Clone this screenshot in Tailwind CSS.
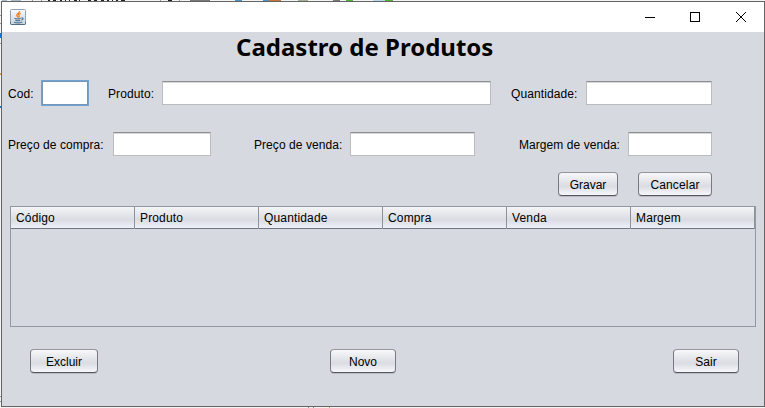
<!DOCTYPE html>
<html lang="pt-BR">
<head>
<meta charset="utf-8">
<title>Cadastro de Produtos</title>
<script src="https://cdn.jsdelivr.net/npm/@tailwindcss/browser@4"></script>
</head>
<body class="h-[408px] w-[765px] overflow-hidden bg-[#f4f4f4] font-['Liberation_Sans',Arial,sans-serif] text-xs text-black">
<div class="relative h-[408px] w-[765px] pl-px pt-px">
  <!-- slivers of the editor behind the window -->
  <svg class="absolute left-0 top-0" width="765" height="408" shape-rendering="crispEdges">
    <path fill="#a9bccb" d="M2 0h5v1H2zM11 0h10v1H11z"/><path fill="#999" d="M32 0h1v1h-1zM41 0h1v1h-1zM160 0h1v1h-1zM179 0h1v1h-1zM0 15h1v1H0zM0 23h1v1H0zM0 43h1v1H0zM0 396h1v1H0zM0 401h1v1H0z"/>
    <path fill="#222" d="M48 0h2v1h-2zM53 0h3v1h-3zM60 0h2v1h-2zM65 0h1v1h-1zM69 0h1v1h-1zM74 0h3v1h-3zM79 0h1v1h-1zM88 0h3v1h-3zM94 0h3v1h-3zM101 0h3v1h-3zM107 0h2v1h-2zM112 0h1v1h-1zM116 0h2v1h-2zM121 0h4v1h-4zM168 0h4v1h-4z"/>
    <path fill="#777" d="M190 0h20v1h-20zM333 0h7v1h-7z"/><path fill="#4b91c4" d="M235 0h7v1h-7zM263 0h6v1h-6z"/><path fill="#cc7434" d="M269 0h12v1h-12z"/><path fill="#a2b096" d="M298 0h10v1h-10z"/><path fill="#50b52c" d="M346 0h7v1h-7zM385 0h8v1h-8z"/><path fill="#b8d8ee" d="M373 0h12v1h-12z"/>
    <path fill="#1573cf" d="M0 33h1v5H0zM0 106h1v2H0z"/><path fill="#e0a040" d="M0 73h1v2H0zM329 407h1v1h-1z"/><path fill="#888" d="M308 407h1v1h-1zM313 407h1v1h-1z"/>
  </svg>

  <main class="relative flex h-[406px] w-[764px] flex-col border border-[#646464] bg-[#d6d9df]">
    <header class="flex h-[30px] shrink-0 items-center bg-white pl-2">
      <svg width="16" height="16" viewBox="0 0 16 16" fill="none">
        <defs><linearGradient id="tile" x2="0" y2="1"><stop stop-color="#f7fafc"/><stop offset="1" stop-color="#c9d5df"/></linearGradient></defs>
        <rect x=".5" y=".5" width="15" height="15" rx="1" fill="url(#tile)" stroke="#8fa2b4"/>
        <path d="M.5 13v1.500q0 1 1 1h13q1 0 1-1V13" stroke="#4f6c88"/>
        <path d="M9.700 2.200C10 4 6.200 4.800 6.800 6.500c.3.800 1.200 1.100.9 1.900M10.700 4.300C9 5 8.200 5.800 9.100 6.900c.4.600-.1 1.200-.6 1.600" stroke="#ed7d20" stroke-width="1.300"/>
        <path d="M4.500 9.300c1.500.6 5 .5 6.300 0M5.300 11.200c1.200.5 3.800.5 4.900 0M4 13.200c2 .7 6 .7 8.200-.2M11.300 9c2.300-.8 2.400 1.500.2 2.100" stroke="#50708f" stroke-width="1.100"/>
      </svg>
      <svg class="ml-auto mr-4" width="103" height="12" viewBox="0 0 103 12" fill="none" stroke="#000">
        <path d="M0 6.500h10M45.500 1.500h9v9h-9z" shape-rendering="crispEdges"/>
        <path d="m91 1 10 10m0-10L91 11"/>
      </svg>
    </header>

    <h1 class="ml-[234px] h-[48px] w-max whitespace-nowrap font-['Noto_Sans','Open_Sans',sans-serif] text-2xl leading-[29px] font-bold">Cadastro de Produtos</h1>

    <section class="flex h-[26px] shrink-0 items-center pl-1.5 tracking-[0.1px]">
      <label class="w-[34px] whitespace-nowrap pt-0.5">Cod:</label>
      <input class="h-6 w-[46px] border border-[#7596b8] bg-white shadow-[0_0_0_1px_#73a4d1] outline-none">
      <label class="ml-[20px] w-[54px] whitespace-nowrap pt-0.5">Produto:</label>
      <input class="h-6 w-[329px] border border-[#bbbcbe] border-t-[#8d8e91] bg-white shadow-[inset_0_1px_#d8d8d8]">
      <label class="ml-[20px] w-[75px] whitespace-nowrap pt-0.5">Quantidade:</label>
      <input class="h-6 w-[126px] border border-[#bbbcbe] border-t-[#8d8e91] bg-white shadow-[inset_0_1px_#d8d8d8]">
    </section>

    <section class="mt-[26px] flex h-6 shrink-0 items-center pl-1.5 tracking-[0.06px]">
      <label class="w-[105px] whitespace-nowrap pt-0.5">Preço de compra:</label>
      <input class="h-6 w-[98px] border border-[#bbbcbe] border-t-[#8d8e91] bg-white shadow-[inset_0_1px_#d8d8d8]">
      <label class="ml-[43px] w-[96px] whitespace-nowrap pt-0.5">Preço de venda:</label>
      <input class="h-6 w-[125px] border border-[#bbbcbe] border-t-[#8d8e91] bg-white shadow-[inset_0_1px_#d8d8d8]">
      <label class="ml-[44px] w-[109px] whitespace-nowrap pt-0.5">Margem de venda:</label>
      <input class="h-6 w-[84px] border border-[#bbbcbe] border-t-[#8d8e91] bg-white shadow-[inset_0_1px_#d8d8d8]">
    </section>

    <section class="mt-4 flex h-6 shrink-0 justify-end gap-5 pr-[52px]">
      <button class="h-6 w-[60px] rounded border border-[#777a82] border-t-[#94979d] border-b-[#53565c] bg-linear-to-b from-[#f8f8fa] via-[#d9dce2] via-60% to-[#f6f8fc] pt-0.5 shadow-[0_1px_#b9bcc2]">Gravar</button>
      <button class="h-6 w-[74px] rounded border border-[#777a82] border-t-[#94979d] border-b-[#53565c] bg-linear-to-b from-[#f8f8fa] via-[#d9dce2] via-60% to-[#f6f8fc] pt-0.5 tracking-[0.15px] shadow-[0_1px_#b9bcc2]">Cancelar</button>
    </section>

    <section class="ml-2 mt-2.5 h-[121px] w-[746px] shrink-0 border border-[#9297a1]">
      <div class="grid h-[22px] grid-cols-[repeat(6,124px)] border-b border-[#70757f] bg-linear-to-b from-[#f5f5f7] via-[#d9dce2] via-60% to-[#edf0f6] leading-[22px] tracking-[0.15px]">
        <div class="border-r border-[#8d929c] pl-[5px]">Código</div>
        <div class="border-r border-[#8d929c] pl-[5px]">Produto</div>
        <div class="border-r border-[#8d929c] pl-[5px]">Quantidade</div>
        <div class="border-r border-[#8d929c] pl-[5px]">Compra</div>
        <div class="border-r border-[#8d929c] pl-[5px]">Venda</div>
        <div class="border-r border-[#8d929c] pl-[5px]">Margem</div>
      </div>
    </section>

    <footer class="mt-[22px] flex h-6 pl-7 pr-[25px]">
      <button class="h-6 w-[68px] rounded border border-[#777a82] border-t-[#94979d] border-b-[#53565c] bg-linear-to-b from-[#f8f8fa] via-[#d9dce2] via-60% to-[#f6f8fc] pt-0.5 shadow-[0_1px_#b9bcc2]">Excluir</button>
      <button class="ml-[232px] h-6 w-[66px] rounded border border-[#777a82] border-t-[#94979d] border-b-[#53565c] bg-linear-to-b from-[#f8f8fa] via-[#d9dce2] via-60% to-[#f6f8fc] pt-0.5 shadow-[0_1px_#b9bcc2]">Novo</button>
      <button class="ml-auto h-6 w-[66px] rounded border border-[#777a82] border-t-[#94979d] border-b-[#53565c] bg-linear-to-b from-[#f8f8fa] via-[#d9dce2] via-60% to-[#f6f8fc] pt-0.5 shadow-[0_1px_#b9bcc2]">Sair</button>
    </footer>
  </main>
</div>
</body>
</html>
